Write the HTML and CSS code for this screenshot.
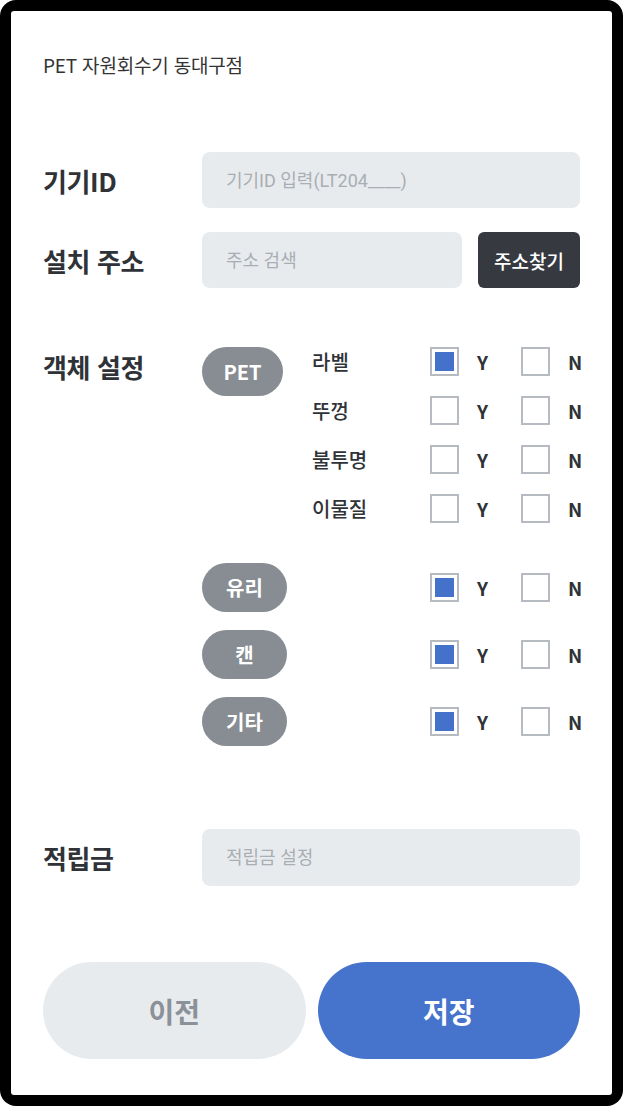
FILE: index.html
```html
<!DOCTYPE html>
<html lang="ko">
<head>
  <meta charset="UTF-8" />
  <meta name="viewport" content="width=device-width, initial-scale=1.0" />
  <title>PET 자원회수기 동대구점</title>
  <link rel="stylesheet" href="styles.css">
</head>
<body>
  <div class="frame">
    <div class="card">
      <div class="title">PET 자원회수기 동대구점</div>

      <div class="field first">
        <label class="field-label" for="deviceId">기기ID</label>
        <input type="text" id="deviceId" class="text-input" placeholder="기기ID 입력(LT204____)">
      </div>

      <div class="field">
        <label class="field-label" for="address">설치 주소</label>
        <input type="text" id="address" class="text-input" placeholder="주소 검색">
        <button class="search-btn">주소찾기</button>
      </div>

      <div class="field objects">
        <div class="field-label obj-label">객체 설정</div>
        <div class="obj-list">
          <div class="pet-group">
            <div class="pill-col"><span class="pill short">PET</span></div>
            <div class="sub-rows">
              <div class="sub-row">
                <span class="sub-label">라벨</span>
                <label class="opt"><input type="checkbox" checked><span>Y</span></label>
                <label class="opt"><input type="checkbox"><span>N</span></label>
              </div>
              <div class="sub-row">
                <span class="sub-label">뚜껑</span>
                <label class="opt"><input type="checkbox"><span>Y</span></label>
                <label class="opt"><input type="checkbox"><span>N</span></label>
              </div>
              <div class="sub-row">
                <span class="sub-label">불투명</span>
                <label class="opt"><input type="checkbox"><span>Y</span></label>
                <label class="opt"><input type="checkbox"><span>N</span></label>
              </div>
              <div class="sub-row">
                <span class="sub-label">이물질</span>
                <label class="opt"><input type="checkbox"><span>Y</span></label>
                <label class="opt"><input type="checkbox"><span>N</span></label>
              </div>
            </div>
          </div>

          <div class="obj-row">
            <div class="pill-wide"><span class="pill">유리</span></div>
            <label class="opt"><input type="checkbox" checked><span>Y</span></label>
            <label class="opt"><input type="checkbox"><span>N</span></label>
          </div>
          <div class="obj-row">
            <div class="pill-wide"><span class="pill">캔</span></div>
            <label class="opt"><input type="checkbox" checked><span>Y</span></label>
            <label class="opt"><input type="checkbox"><span>N</span></label>
          </div>
          <div class="obj-row">
            <div class="pill-wide"><span class="pill">기타</span></div>
            <label class="opt"><input type="checkbox" checked><span>Y</span></label>
            <label class="opt"><input type="checkbox"><span>N</span></label>
          </div>
        </div>
      </div>

      <div class="field points">
        <label class="field-label" for="points">적립금</label>
        <input type="text" id="points" class="text-input" placeholder="적립금 설정">
      </div>

      <div class="actions">
        <button class="btn prev">이전</button>
        <button class="btn save">저장</button>
      </div>
    </div>
  </div>
</body>
</html>
```

FILE: styles.css
```css
body {
  margin: 0;
  background-color: #fff;
  font-family: "Noto Sans CJK KR", "Noto Sans", sans-serif;
  color: #2f3338;
}
.frame {
  width: 623px;
  height: 1106px;
  box-sizing: border-box;
  padding: 11px;
  background-color: #000;
  border-radius: 16px;
}
.card {
  height: 100%;
  box-sizing: border-box;
  padding: 41px 32px 0 32px;
  background-color: #fff;
  border-radius: 3px;
}
.title {
  font-size: 19px;
  line-height: 26px;
  color: #333;
  letter-spacing: -0.2px;
}
.field {
  display: flex;
  align-items: center;
  margin-top: 24px;
}
.field.first {
  margin-top: 74px;
}
.field-label {
  width: 159px;
  flex-shrink: 0;
  font-size: 26px;
  font-weight: 700;
  letter-spacing: -0.4px;
}
.text-input {
  flex: 1;
  min-width: 0;
  height: 56px;
  box-sizing: border-box;
  padding: 0 0 0 24px;
  border: none;
  border-radius: 8px;
  background-color: #e8ebee;
  font-family: "Roboto", "Noto Sans CJK KR", sans-serif;
  font-size: 18px;
  color: #2f3338;
}
.text-input::placeholder {
  color: #a9aeb4;
}
.search-btn {
  width: 102px;
  height: 56px;
  margin-left: 16px;
  border: none;
  border-radius: 6px;
  background-color: #363a40;
  color: #fff;
  font-family: inherit;
  font-size: 19px;
  font-weight: 500;
}
.objects {
  align-items: flex-start;
  margin-top: 59px;
}
.obj-label {
  line-height: 40px;
}
.obj-list {
  display: flex;
  flex-direction: column;
}
.pet-group {
  display: flex;
  margin-bottom: 40px;
}
.pill-col {
  width: 110px;
}
.pill-wide {
  width: 228px;
}
.pill {
  display: inline-flex;
  align-items: center;
  justify-content: center;
  width: 85px;
  height: 49px;
  border-radius: 25px;
  background-color: #878d93;
  color: #fff;
  font-size: 20px;
  font-weight: 700;
}
.pill.short {
  width: 81px;
}
.sub-rows {
  display: flex;
  flex-direction: column;
  gap: 20px;
}
.sub-row {
  display: flex;
  align-items: center;
  height: 29px;
}
.sub-label {
  width: 118px;
  font-size: 20px;
  font-weight: 500;
}
.obj-row {
  display: flex;
  align-items: center;
  height: 49px;
  margin-bottom: 18px;
}
.obj-row:last-child {
  margin-bottom: 0;
}
.opt {
  display: flex;
  align-items: center;
  gap: 18px;
  font-size: 19px;
  font-weight: 700;
}
.opt:first-of-type {
  width: 91px;
}
.opt input {
  appearance: none;
  -webkit-appearance: none;
  width: 29px;
  height: 29px;
  margin: 0;
  box-sizing: border-box;
  border: 2px solid #b5bbc1;
  background-color: #fff;
}
.opt input:checked {
  background-color: #4472ca;
  box-shadow: inset 0 0 0 3px #fff;
}
.points {
  margin-top: 83px;
}
.points .text-input {
  height: 57px;
}
.actions {
  display: flex;
  gap: 12px;
  margin-top: 76px;
}
.btn {
  flex: 1;
  height: 97px;
  border: none;
  border-radius: 49px;
  font-family: inherit;
  font-size: 28px;
  font-weight: 700;
}
.btn.prev {
  background-color: #e8ebee;
  color: #8b9198;
}
.btn.save {
  background-color: #4674cc;
  color: #fff;
}
```
